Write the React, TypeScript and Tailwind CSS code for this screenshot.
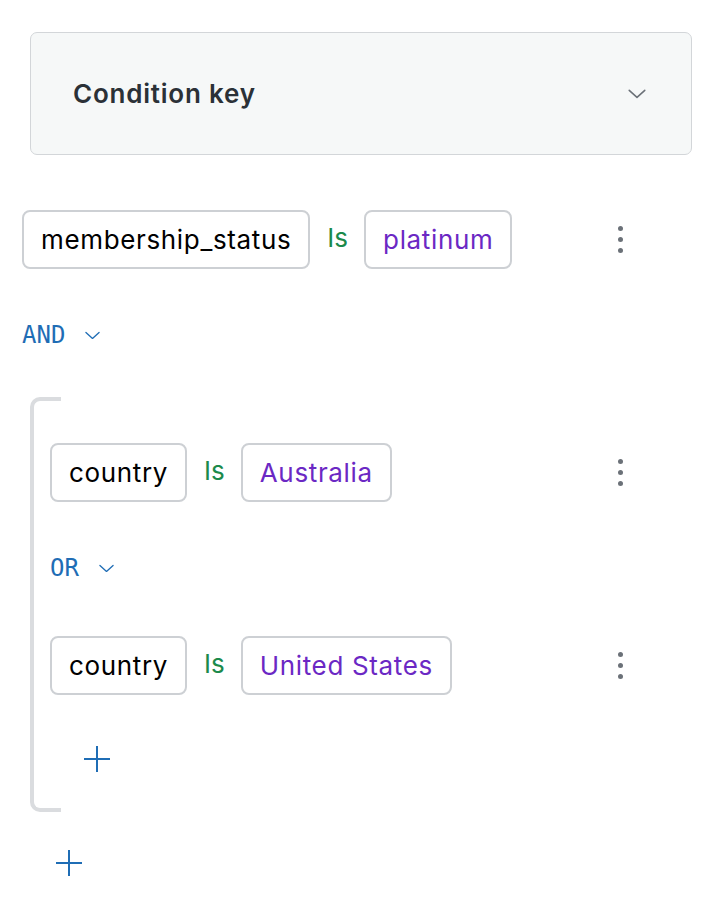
import React from "react";

const Chevron = ({ className }: { className?: string }) => (
  <svg viewBox="0 0 16 9" className={className} fill="none" stroke="currentColor" strokeWidth="1.4" strokeLinecap="round" strokeLinejoin="round">
    <path d="M1 1.2 L8 7.6 L15 1.2" />
  </svg>
);

const Plus = () => (
  <svg viewBox="0 0 26 26" className="w-[26px] h-[26px] text-[#1f6db5]" fill="none" stroke="currentColor" strokeWidth="2">
    <path d="M13 0 V26 M0 13 H26" />
  </svg>
);

const Kebab = () => (
  <div className="ml-auto w-[44px] flex flex-col items-center gap-[6px]">
    <span className="block w-[5px] h-[5px] rounded-full bg-[#6b7178]" />
    <span className="block w-[5px] h-[5px] rounded-full bg-[#6b7178]" />
    <span className="block w-[5px] h-[5px] rounded-full bg-[#6b7178]" />
  </div>
);

const Box = ({ children, purple }: { children: React.ReactNode; purple?: boolean }) => (
  <div
    className={`h-[59px] px-[17px] flex items-center border-2 border-[#cdd0d4] rounded-[8px] bg-white text-[26px] tracking-[0.025em] leading-none ${
      purple ? "text-[#6b28c4]" : "text-black"
    }`}
  >
    {children}
  </div>
);

const Row = ({ field, value }: { field: string; value: string }) => (
  <div className="flex items-center">
    <Box>{field}</Box>
    <span className="ml-[17px] mr-[16px] text-[26px] leading-none text-[#1b8a4b] -mt-[4px]">Is</span>
    <Box purple>{value}</Box>
    <Kebab />
  </div>
);

const Logic = ({ label, gap }: { label: string; gap: string }) => (
  <div className="h-[32px] flex items-center text-[#1f6db5]">
    <span className="text-[24px] leading-none" style={{ fontFamily: '"DejaVu Sans Mono", "Liberation Mono", monospace' }}>
      {label}
    </span>
    <Chevron className={`w-[15px] h-[9px] ${gap}`} />
  </div>
);

export default function App() {
  return (
    <div className="w-[722px] min-h-[908px] bg-white" style={{ fontFamily: 'Inter, "Noto Sans", sans-serif' }}>
      <div className="pt-[32px] px-[30px]">
        <div className="h-[123px] border border-[#d3d6d9] rounded-[7px] bg-[#f6f8f8] flex items-center pl-[42px] pr-[45px]">
          <span className="text-[26px] font-semibold tracking-[0.03em] text-[#2b3137] leading-none">Condition key</span>
          <Chevron className="ml-auto w-[18px] h-[10px] text-[#6b7178]" />
        </div>
      </div>

      <div className="pl-[22px] pr-[80px]">
        <div className="mt-[55px]">
          <Row field="membership_status" value="platinum" />
        </div>

        <div className="mt-[50px]">
          <Logic label="AND" gap="ml-[20px]" />
        </div>

        <div className="relative mt-[46px] ml-[8px] pl-[20px] pt-[46px] pb-[40px]">
          <div className="absolute left-0 top-0 bottom-0 w-[31px] border-l-4 border-y-4 border-[#dadcdf] rounded-l-[10px]" />
          <Row field="country" value="Australia" />
          <div className="mt-[50px]">
            <Logic label="OR" gap="ml-[20px]" />
          </div>
          <div className="mt-[52px]">
            <Row field="country" value="United States" />
          </div>
          <div className="mt-[51px] ml-[34px]">
            <Plus />
          </div>
        </div>

        <div className="mt-[38px] ml-[34px] pb-[20px]">
          <Plus />
        </div>
      </div>
    </div>
  );
}
